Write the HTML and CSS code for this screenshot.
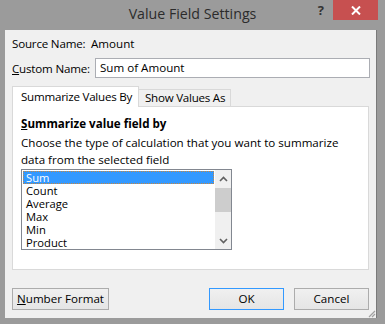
FILE: index.html
```html
<!DOCTYPE html>
<html>
<head>
<meta charset="utf-8">
<link rel="stylesheet" href="styles.css">
</head>
<body>
<div class="window">
  <div class="titlebar">
    <div class="spacer"></div>
    <div class="title">Value Field Settings</div>
    <div class="controls">
      <span class="help">?</span>
      <span class="close">
        <svg width="10" height="9" viewBox="0 0 10 9"><path d="M1 0.5 L9 8.5 M9 0.5 L1 8.5" stroke="#fff" stroke-width="2"/></svg>
      </span>
    </div>
  </div>
  <div class="client">
    <div class="row source">
      <span class="label">Source Name:</span>
      <span class="value">Amount</span>
    </div>
    <div class="row custom">
      <span class="label"><u>C</u>ustom Name:</span>
      <div class="input">Sum of Amount</div>
    </div>
    <div class="tabs">
      <div class="tab active">Summarize Values By</div>
      <div class="tab">Show Values As</div>
    </div>
    <div class="panel">
      <div class="heading"><u>S</u>ummarize value field by</div>
      <div class="desc">Choose the type of calculation that you want to summarize<br>data from the selected field</div>
      <div class="listbox">
        <div class="items">
          <div class="item selected">Sum</div>
          <div class="item">Count</div>
          <div class="item">Average</div>
          <div class="item">Max</div>
          <div class="item">Min</div>
          <div class="item">Product</div>
        </div>
        <div class="scrollbar">
          <div class="arrow">
            <svg width="9" height="6" viewBox="0 0 9 6"><path d="M1 5 L4.5 1.5 L8 5" fill="none" stroke="#606060" stroke-width="1.6"/></svg>
          </div>
          <div class="track"><div class="thumb"></div></div>
          <div class="arrow">
            <svg width="9" height="6" viewBox="0 0 9 6"><path d="M1 1 L4.5 4.5 L8 1" fill="none" stroke="#606060" stroke-width="1.6"/></svg>
          </div>
        </div>
      </div>
    </div>
    <div class="buttons">
      <div class="btn numfmt"><u>N</u>umber Format</div>
      <div class="right">
        <div class="btn ok">OK</div>
        <div class="btn">Cancel</div>
      </div>
    </div>
    <div class="grip">
      <svg width="8" height="8" viewBox="0 0 8 8"><path d="M7 1 L1 7 M7 4 L4 7" stroke="#a0a0a0" stroke-width="1.2"/></svg>
    </div>
  </div>
</div>
</body>
</html>
```

FILE: styles.css
```css
* { box-sizing: border-box; }
html, body { margin: 0; padding: 0; }
body {
  background: #9b9b9b;
  font-family: "Open Sans", "Noto Sans", sans-serif;
  font-size: 11.6px;
  color: #000;
}
.window {
  width: 385px;
  height: 324px;
  display: flex;
  flex-direction: column;
  background: #9b9b9b;
}
.titlebar {
  height: 30px;
  display: grid;
  grid-template-columns: 1fr auto 1fr;
}
.title {
  font-size: 14.2px;
  color: #2b2b2b;
  line-height: 28px;
  white-space: nowrap;
}
.controls {
  display: flex;
  justify-content: flex-end;
  align-items: flex-start;
  padding-right: 7px;
}
.help {
  font-size: 13px;
  font-weight: bold;
  color: #333;
  line-height: 20px;
  margin-right: 9px;
}
.close {
  width: 45px;
  height: 20px;
  background: #c75050;
  display: flex;
  align-items: center;
  justify-content: center;
}
.client {
  position: relative;
  flex: 1;
  margin: 0 8px 6px 5px;
  background: #f0f0f0;
  padding: 5px 7px 0 7px;
  border-right: 1px solid #7a7a7a;
}
.row { display: flex; align-items: center; white-space: nowrap; }
.source { height: 16px; }
.label { flex: none; width: 79px; letter-spacing: -0.2px; }
.custom { margin-top: 7px; height: 20px; }
.custom .label { width: 83px; }
.input {
  flex: 1;
  height: 20px;
  margin-right: -1px;
  background: #fff;
  border: 1px solid #abadb3;
  padding: 0 4px;
  line-height: 18px;
}
.tabs {
  display: flex;
  align-items: flex-end;
  margin-top: 8px;
  height: 20px;
  position: relative;
  z-index: 1;
}
.tab {
  height: 17px;
  border: 1px solid #d9d9d9;
  border-bottom: none;
  background: #f0f0f0;
  padding: 0 5px 0 6px;
  line-height: 16px;
  margin-left: -1px;
  white-space: nowrap;
  letter-spacing: -0.25px;
}
.tab.active {
  height: 21px;
  background: #fff;
  border-color: #d9d9d9;
  margin-left: 0;
  margin-bottom: -1px;
  padding: 0 6px 0 8px;
  line-height: 20px;
}
.panel {
  height: 164px;
  width: 357px;
  background: #fff;
  border: 1px solid #d9d9d9;
  padding: 9px 8px 0 8px;
}
.heading {
  font-weight: bold;
  line-height: 16px;
  white-space: nowrap;
}
.desc {
  margin-top: 2px;
  line-height: 17px;
  white-space: nowrap;
}
.listbox {
  margin-top: 1px;
  width: 211px;
  height: 81px;
  border: 1px solid #828790;
  display: flex;
  padding: 1px 0 1px 1px;
}
.items { flex: 1; font-size: 11.2px; }
.item {
  height: 13px;
  line-height: 13px;
  padding-left: 3px;
}
.item.selected {
  background: #3399ff;
  color: #fff;
  outline: 1px dotted #c9873f;
  outline-offset: -1px;
}
.scrollbar {
  width: 16px;
  background: #f0f0f0;
  display: flex;
  flex-direction: column;
  margin-top: -1px;
  margin-bottom: -1px;
  margin-left: 1px;
}
.arrow {
  height: 17px;
  display: flex;
  align-items: center;
  justify-content: center;
}
.track { flex: 1; padding-top: 1px; }
.thumb {
  height: 24px;
  background: #cdcdcd;
}
.buttons {
  margin-top: 18px;
  display: flex;
  justify-content: space-between;
}
.right { display: flex; gap: 10px; }
.btn {
  height: 22px;
  width: 75px;
  border: 1px solid #acacac;
  background: linear-gradient(#f0f0f0, #e5e5e5);
  text-align: center;
  line-height: 20px;
  white-space: nowrap;
}
.btn.numfmt { width: 97px; }
.btn.ok { border-color: #3399ff; }
.grip {
  position: absolute;
  right: 0;
  bottom: 0;
  width: 8px;
  height: 8px;
  display: flex;
}
```
